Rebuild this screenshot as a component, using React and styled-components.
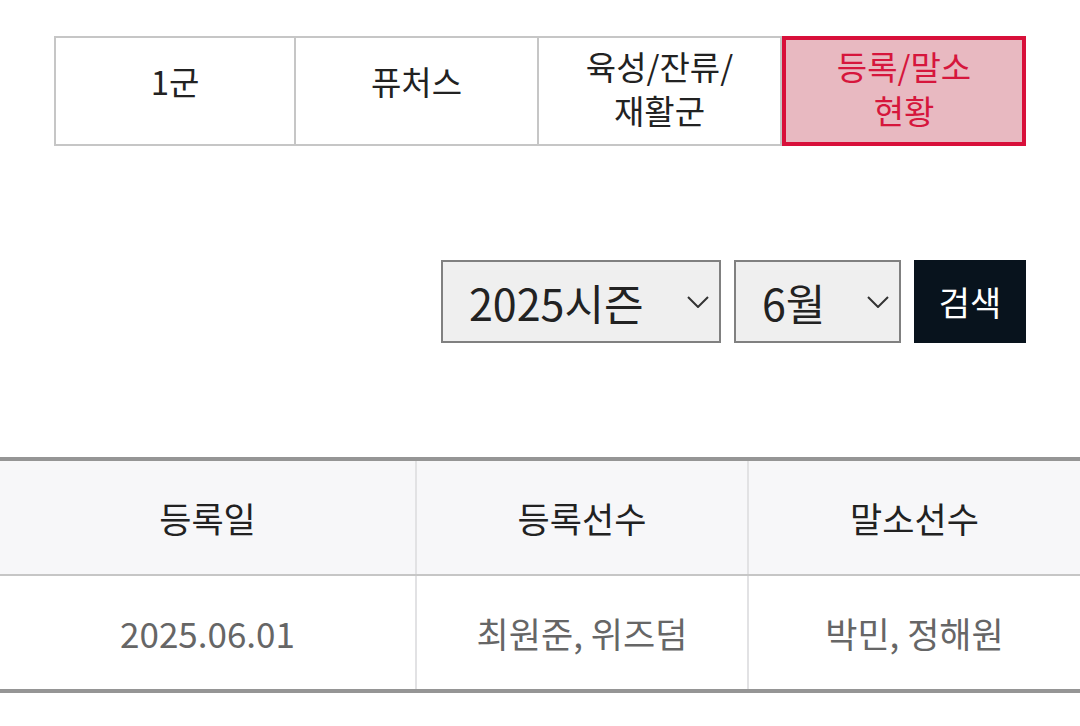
import React, { useState } from "react";
import styled, { createGlobalStyle } from "styled-components";

const GlobalStyle = createGlobalStyle`
  html, body {
    margin: 0;
    padding: 0;
    background: #fff;
  }
  body {
    font-family: "Noto Sans CJK KR", "Noto Sans", sans-serif;
    color: #222;
  }
  * {
    box-sizing: border-box;
  }
`;

const Page = styled.div`
  width: 1080px;
  padding-top: 36px;
`;

const Tabs = styled.div`
  display: grid;
  grid-template-columns: 242px 243px 243px 244px;
  margin: 0 54px;
  height: 110px;
`;

const Tab = styled.button`
  display: flex;
  align-items: center;
  justify-content: center;
  padding: 0 10px ${(p) => (p.$single ? "20px" : "6px")};
  font-family: "Noto Sans CJK KR", "Noto Sans", sans-serif;
  font-size: 33px;
  line-height: 44px;
  text-align: center;
  cursor: pointer;
  color: ${(p) => (p.$active ? "#d6163c" : "#222")};
  background: ${(p) => (p.$active ? "#e8b9c1" : "#fff")};
  border: ${(p) => (p.$active ? "4px solid #d8103a" : "2px solid #c6c6c6")};
  border-left-width: ${(p) => (p.$active ? "4px" : p.$first ? "2px" : "0")};
`;

const FilterRow = styled.div`
  display: flex;
  justify-content: flex-end;
  gap: 13px;
  margin: 114px 54px 0;
  height: 83px;
`;

const SelectWrap = styled.div`
  position: relative;
  width: ${(p) => p.$width}px;
  height: 100%;
`;

const Select = styled.select`
  appearance: none;
  width: 100%;
  height: 100%;
  padding: 0 40px 0 26px;
  font-family: "Noto Sans CJK KR", "Noto Sans", sans-serif;
  font-size: 43px;
  color: #222;
  background: #efefef;
  border: 2px solid #808080;
  border-radius: 0;
  outline: none;
`;

const Chevron = styled.svg`
  position: absolute;
  right: 12px;
  top: 36px;
  width: 22px;
  height: 12px;
  pointer-events: none;
`;

const SearchButton = styled.button`
  width: 112px;
  height: 100%;
  border: none;
  background: #08131d;
  color: #fff;
  font-family: "Noto Sans CJK KR", "Noto Sans", sans-serif;
  font-size: 34px;
  cursor: pointer;
`;

const Table = styled.table`
  width: 100%;
  margin-top: 114px;
  border-collapse: collapse;
  table-layout: fixed;
  border-top: 4px solid #959595;
  border-bottom: 4px solid #959595;
`;

const Th = styled.th`
  height: 116px;
  font-weight: 400;
  font-size: 35px;
  color: #222;
  background: #f7f7f9;
  border-bottom: 2px solid #c6c6c6;
  border-left: 2px solid #e2e2e4;
  &:first-child {
    border-left: none;
  }
`;

const Td = styled.td`
  height: 116px;
  text-align: center;
  font-size: 35px;
  color: #666;
  border-left: 2px solid #e2e2e4;
  &:first-child {
    border-left: none;
  }
`;

const tabs = [
  { label: "1군" },
  { label: "퓨처스" },
  { label: ["육성/잔류/", "재활군"] },
  { label: ["등록/말소", "현황"] },
];

const rows = [
  { date: "2025.06.01", added: "최원준, 위즈덤", removed: "박민, 정해원" },
];

const ChevronIcon = () => (
  <Chevron viewBox="0 0 22 12" fill="none">
    <path d="M1 1L11 11L21 1" stroke="#333" strokeWidth="2" />
  </Chevron>
);

const App = () => {
  const [active, setActive] = useState(3);
  const [season, setSeason] = useState("2025");
  const [month, setMonth] = useState("6");

  return (
    <Page>
      <GlobalStyle />
      <Tabs>
        {tabs.map((t, i) => (
          <Tab
            key={i}
            $first={i === 0}
            $single={!Array.isArray(t.label)}
            $active={i === active}
            onClick={() => setActive(i)}
          >
            <span>
              {Array.isArray(t.label)
                ? t.label.map((l, j) => (
                    <React.Fragment key={j}>
                      {j > 0 && <br />}
                      {l}
                    </React.Fragment>
                  ))
                : t.label}
            </span>
          </Tab>
        ))}
      </Tabs>

      <FilterRow>
        <SelectWrap $width={280}>
          <Select value={season} onChange={(e) => setSeason(e.target.value)}>
            <option value="2025">2025시즌</option>
            <option value="2024">2024시즌</option>
          </Select>
          <ChevronIcon />
        </SelectWrap>
        <SelectWrap $width={167}>
          <Select value={month} onChange={(e) => setMonth(e.target.value)}>
            {[3, 4, 5, 6, 7, 8, 9, 10].map((m) => (
              <option key={m} value={String(m)}>
                {m}월
              </option>
            ))}
          </Select>
          <ChevronIcon />
        </SelectWrap>
        <SearchButton>검색</SearchButton>
      </FilterRow>

      <Table>
        <colgroup>
          <col style={{ width: "416px" }} />
          <col style={{ width: "332px" }} />
          <col style={{ width: "332px" }} />
        </colgroup>
        <thead>
          <tr>
            <Th>등록일</Th>
            <Th>등록선수</Th>
            <Th>말소선수</Th>
          </tr>
        </thead>
        <tbody>
          {rows.map((r) => (
            <tr key={r.date}>
              <Td>{r.date}</Td>
              <Td>{r.added}</Td>
              <Td>{r.removed}</Td>
            </tr>
          ))}
        </tbody>
      </Table>
    </Page>
  );
};

export default App;
